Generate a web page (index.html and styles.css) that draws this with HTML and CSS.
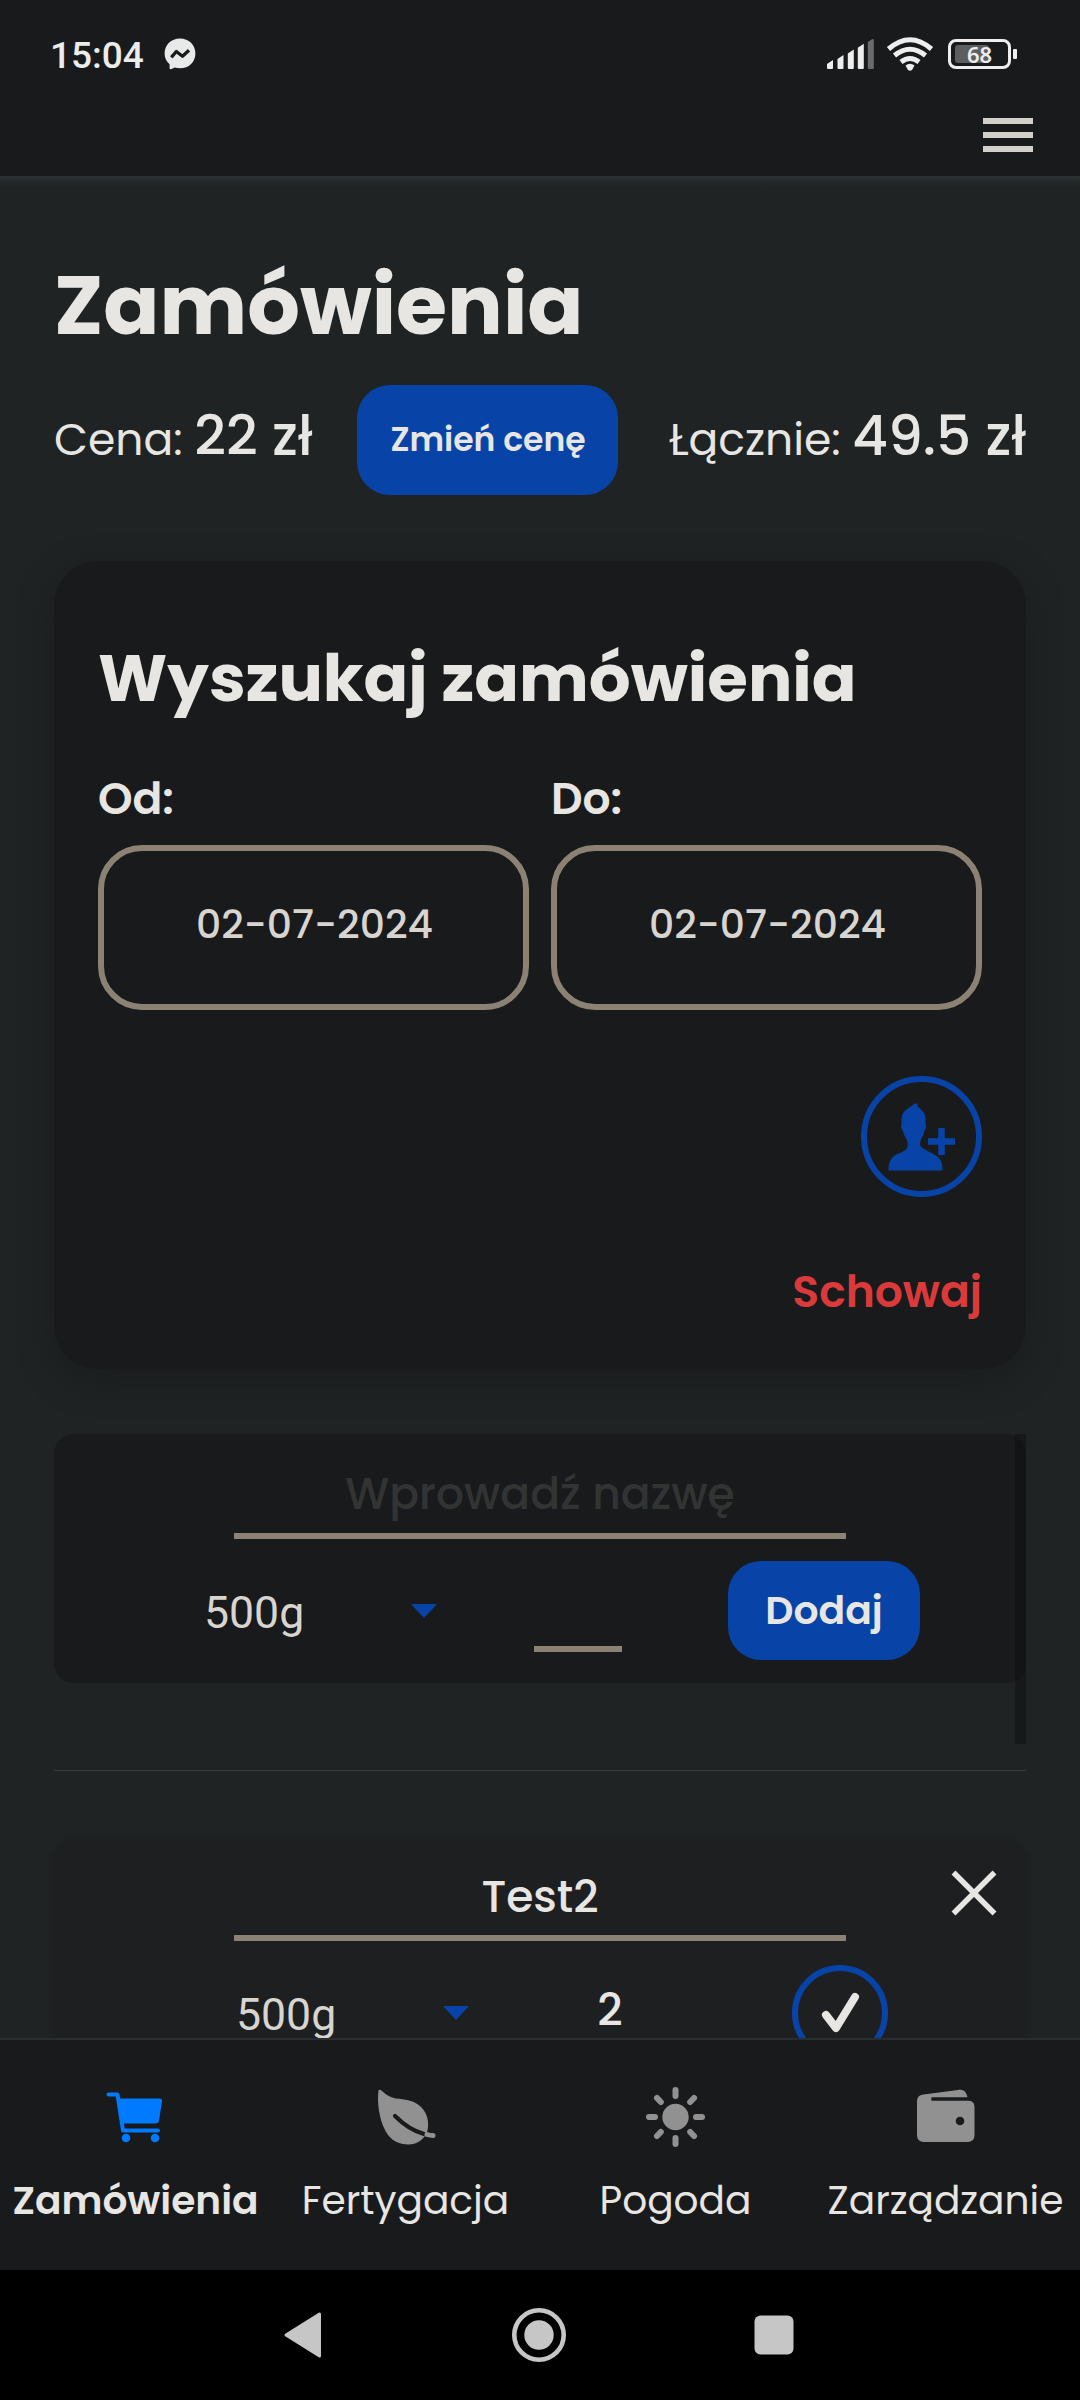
FILE: index.html
```html
<!DOCTYPE html>
<html lang="pl">
<head>
<meta charset="utf-8">
<title>Zamówienia</title>
<link rel="stylesheet" href="styles.css">
</head>
<body>
<div class="screen">
  <header class="header">
    <div class="status">
      <span class="clock">15:04</span>
      <svg class="messenger" width="32" height="32" viewBox="0 0 32 32"><path fill="#e8eae9" d="M16 .5C7 .5.6 7 .6 15.400c0 4.600 1.800 8 5 10.800V30c0 1.200.8 1.600 1.800 1.100l3.500-1.600c1.600.5 3.300.8 5.100.8 9 0 15.400-6.500 15.400-14.900S25 .5 16 .5z"/><path fill="none" stroke="#191a1c" stroke-width="3.300" stroke-linejoin="round" d="M7.300 19.300l5-5.800 6.200 4.800 6.500-6"/></svg>
      <svg class="signal" width="50" height="32" viewBox="0 0 50 32"><g fill="#eee"><path d="M1 26l6-4v8q0 1-1 1H2q-1 0-1-1zM11.500 21l6-4v13q0 1-1 1h-4q-1 0-1-1zM21.800 15.500l6-4V30q0 1-1 1h-4q-1 0-1-1zM31.800 9.800l6-4V30q0 1-1 1h-4q-1 0-1-1z"/><path fill="#6a6b6c" d="M41.800 4l4.500-3q1.500 0 1.500 1v28q0 1-1 1h-4q-1 0-1-1z"/></g></svg>
      <svg class="wifi" width="48" height="36" viewBox="0 0 48 36"><g fill="none" stroke="#eee" stroke-width="5"><path d="M2.500 13Q24-5.500 45.500 13M8.500 19.500q15.500-12.500 31 0M15 26q9-7 18 0"/></g><path fill="#eee" d="M19.500 29.500q4.500-3.500 9 0L26 34q-2 1.500-4 0z"/></svg>
      <span class="battery"><span class="battery-body"><span class="battery-level"></span><b>68</b></span><span class="battery-tip"></span></span>
    </div>
    <div class="menu"><i></i><i></i><i></i></div>
  </header>

  <main class="main">
    <h1>Zamówienia</h1>
    <div class="summary">
      <p>Cena: <strong>22 zł</strong></p>
      <button class="btn btn-price">Zmień cenę</button>
      <p class="total">Łącznie: <strong>49.5 zł</strong></p>
    </div>

    <section class="search">
      <h2>Wyszukaj zamówienia</h2>
      <div class="dates">
        <div class="field"><label>Od:</label><div class="date">02-07-2024</div></div>
        <div class="field"><label>Do:</label><div class="date">02-07-2024</div></div>
      </div>
      <div class="add-user">
        <svg width="110" height="110" viewBox="1 1 110 110"><path fill="#0844a8" d="M49 22.500c-3 2.500-10 5.500-12.500 11-1.200 3.500-1.200 7-.8 10.500-1 .5-.6 4 .8 5.500 1 1 .9 2.500 1.500 4 .8 2.500 3 4.500 3.500 7 .5 4 .5 6.500-2 8.500-4.500 3-9.500 3.500-13 7.500-3.500 3.800-4 8.500-4 13h54c0-4.500-.5-9.200-4-13-4-4-9.500-5-14-8.500-4.500-2-5-4.500-4-8 .5-3 2.500-4.500 3-7 .5-1.200.3-2.500 1.200-3.500 1.400-1.500 1.800-5 .8-5.500.3-3.500.3-7-.8-10.500-1-3-3.500-5-6-7-1.500-1-1.800-2.500-.5-4-1.200-.1-2.300-.1-3.200 0z"/><path stroke="#0844a8" stroke-width="6.500" d="M62 60.500h27M75.500 47v27"/></svg>
      </div>
      <a class="hide">Schowaj</a>
    </section>

    <div class="scroll">
      <div class="order order-new">
        <div class="name placeholder">Wprowadź nazwę</div>
        <div class="row">
          <div class="select">500g<i class="caret"></i></div>
          <div class="qty"></div>
          <button class="btn btn-add">Dodaj</button>
        </div>
      </div>
      <span class="scrollbar"></span>
    </div>

    <hr>

    <div class="order order-item">
      <div class="name">Test2</div>
      <svg class="close" width="46" height="46" viewBox="0 0 46 46"><path stroke="#e8e6e3" stroke-width="5.500" d="M2.500 2.500l41 41M43.500 2.500l-41 41"/></svg>
      <div class="row">
        <div class="select">500g<i class="caret"></i></div>
        <div class="qty">2</div>
        <div class="done"><svg width="84" height="84" viewBox="0 0 84 84"><path fill="none" stroke="#e8e6e3" stroke-width="8" stroke-linecap="round" stroke-linejoin="round" d="M28 44l10 13 19-31"/></svg></div>
      </div>
    </div>
  </main>

  <nav class="tabs">
    <a class="tab active">
      <svg width="66" height="66" viewBox="0 0 66 66"><path fill="none" stroke="#007bff" stroke-width="4" stroke-linecap="round" stroke-linejoin="round" d="M7.500 9.500h9l5.500 36h35"/><path fill="#007bff" d="M18 13.500h40.500q3 0 2.500 3L58 35.500q-.5 3-3.500 3H20.500z"/><circle cx="25" cy="53" r="4.300" fill="#007bff"/><circle cx="54" cy="53" r="4.300" fill="#007bff"/></svg>
      <span>Zamówienia</span>
    </a>
    <a class="tab">
      <svg width="66" height="66" viewBox="0 0 66 66"><path fill="#919191" d="M6.500 5.500Q8 4 10 6c5 4.500 8.500 6.500 14 7.500 9 1 16 1.500 22 6 9 6.500 12 17 9 28-4 8-10.500 12-18.500 12C27 59.500 19 56 13.500 46 7 34 5 17 6.500 5.500z"/><path fill="none" stroke="#191a1c" stroke-width="4.200" stroke-linecap="round" d="M23 31c8 8 18 15 29 18"/><path fill="none" stroke="#919191" stroke-width="5" stroke-linecap="round" d="M55 49.500q3 1 6 1"/></svg>
      <span>Fertygacja</span>
    </a>
    <a class="tab">
      <svg width="66" height="66" viewBox="0 0 66 66"><circle cx="33.500" cy="32" r="13.200" fill="#919191"/><g stroke="#919191" stroke-width="6" stroke-linecap="round"><path d="M33.500 5v6M33.500 53v6M7 32h6M54 32h6M15 13l3.800 4M52 13l-3.800 4M15 51l3.800-4M52 51l-3.800-4"/></g></svg>
      <span>Pogoda</span>
    </a>
    <a class="tab">
      <svg width="66" height="66" viewBox="0 0 66 66"><path fill="#919191" d="M5 17c0-5 2.500-7 6.500-7.500L46 5c5-.8 8.500 1.500 9.500 7.500H19.500v3H56q6.500 0 6.500 6.500v28q0 7-7 7H12q-7 0-7-7z"/><path stroke="#191a1c" stroke-width="3" d="M19.500 14H58"/><circle cx="48" cy="36" r="4.300" fill="#191a1c"/></svg>
      <span>Zarządzanie</span>
    </a>
  </nav>

  <footer class="sysnav">
    <svg width="38" height="48" viewBox="0 0 38 48"><path fill="#c6c6c6" stroke="#c6c6c6" stroke-width="3" stroke-linejoin="round" d="M35.500 3v42L2 24z"/></svg>
    <svg class="home" width="56" height="56" viewBox="0 0 56 56"><circle cx="28" cy="28" r="24.700" fill="none" stroke="#c6c6c6" stroke-width="4.600"/><circle cx="28" cy="28" r="14.700" fill="#c6c6c6"/></svg>
    <svg width="40" height="40" viewBox="0 0 40 40"><rect x=".5" y=".5" width="39" height="39" rx="6" fill="#c6c6c6"/></svg>
  </footer>
</div>
</body>
</html>
```
FILE: styles.css
```css
* { box-sizing: border-box; margin: 0; padding: 0; }

body {
  background: #1f2324;
  color: #e8e6e3;
  font: 400 44px/66px "Poppins", Inter, sans-serif;
}

svg { display: block; flex: none; }

.screen {
  width: 1080px;
  height: 2400px;
  display: flex;
  flex-direction: column;
  overflow: hidden;
}

/* Status bar and menu */
.header {
  flex: none;
  height: 176px;
  background: #191a1c;
}

.status {
  display: flex;
  align-items: center;
  height: 108px;
  padding: 0 63px 0 50px;
}

.clock {
  width: 114px;
  padding-top: 3px;
  font: 500 37px/40px Roboto, sans-serif;
  color: #ebedec;
}

.signal { margin-left: auto; }
.wifi { margin-left: 10px; }

.battery {
  display: flex;
  align-items: center;
  margin-left: 14px;
}

.battery-body {
  display: flex;
  align-items: center;
  justify-content: center;
  position: relative;
  width: 63px;
  height: 30px;
  border: 3px solid #eee;
  border-radius: 8px;
  font: 700 22px/24px "Noto Sans", sans-serif;
  color: #eee;
}

.battery-body b { position: relative; font-weight: 600; }

.battery-level {
  position: absolute;
  left: 4px;
  top: 3px;
  width: 34px;
  height: 18px;
  border-radius: 3px;
  background: #5d5e5f;
}

.battery-tip {
  width: 4px;
  height: 10px;
  margin-left: 2px;
  border-radius: 1px;
  background: #eee;
}

.menu {
  display: flex;
  flex-direction: column;
  gap: 8px;
  width: 50px;
  margin: 10px 47px 0 auto;
}

.menu i { height: 6px; background: #d3cfcb; }

/* Content */
.main {
  flex: 1;
  min-height: 0;
  overflow: hidden;
  padding: 69px 54px 0;
  background: linear-gradient(#2d3334, #222728 6px, #1f2324 12px);
}

h1 {
  height: 120px;
  font-size: 82.8px;
  font-weight: 700;
  line-height: 120px;
}

.summary {
  display: flex;
  align-items: center;
  height: 110px;
  margin-top: 20px;
  white-space: nowrap;
}

.summary strong { font-size: 55px; font-weight: 500; line-height: 0; }
.summary .total { margin-left: auto; }

.btn {
  border: 0;
  border-radius: 33px;
  background: #0844a8;
  color: #e8e6e3;
  font-family: inherit;
  font-weight: 600;
}

.btn-price {
  width: 261px;
  height: 110px;
  margin-left: 45px;
  font-size: 33px;
}

.search {
  height: 808px;
  margin-top: 66px;
  padding: 68px 44px 0;
  border-radius: 44px;
  background: #191a1c;
  box-shadow: 0 11px 33px #1b1d1f;
}

h2 {
  font-size: 65.900px;
  font-weight: 700;
  line-height: 99px;
}

.dates {
  display: flex;
  gap: 22px;
  margin-top: 41px;
}

.field { flex: 1; }

.field label {
  display: block;
  font-weight: 600;
  line-height: 60px;
}

.date {
  height: 165px;
  margin-top: 16px;
  padding-left: 2px;
  border: 6px solid #8c8273;
  border-radius: 44px;
  color: #d8d5d0;
  font-size: 39.3px;
  font-weight: 500;
  line-height: 147px;
  text-align: center;
}

.add-user {
  width: 121px;
  height: 121px;
  margin: 66px 0 0 auto;
  border: 6px solid #0844a8;
  border-radius: 50%;
}

.hide {
  display: block;
  margin-top: 62px;
  color: #dc3a3a;
  font-weight: 600;
  text-align: right;
}

/* Orders */
.scroll {
  position: relative;
  height: 310px;
  margin-top: 65px;
}

.scrollbar {
  position: absolute;
  top: 0;
  right: 0;
  width: 11px;
  height: 100%;
  background: rgba(16, 17, 18, .6);
}

.order {
  height: 249px;
  padding-top: 22px;
  border-radius: 20px;
  background: #191a1c;
}

.name {
  width: 612px;
  height: 83px;
  margin: 0 auto;
  border-bottom: 6px solid #8c8273;
  font-weight: 500;
  line-height: 77px;
  text-align: center;
}

.placeholder { color: #323433; line-height: 75px; }

.row {
  display: flex;
  align-items: center;
  height: 99px;
  margin-top: 22px;
  padding-left: 150px;
}

.select {
  display: flex;
  align-items: center;
  justify-content: space-between;
  width: 233px;
  margin-right: 1px;
  color: #d8d5d0;
  font: 400 44.6px/54px Roboto, sans-serif;
  padding-top: 4px;
}

.caret {
  margin-top: -4px;
  border: solid transparent;
  border-width: 14px 13.500px 0;
  border-top-color: #0844a8;
}

.qty {
  width: 88px;
  height: 83px;
  margin-left: 96px;
  border-bottom: 6px solid #8c8273;
  font-weight: 500;
  line-height: 77px;
  text-align: center;
}

.btn-add {
  width: 192px;
  height: 99px;
  margin-left: 106px;
  font-size: 39.3px;
}

hr {
  height: 1px;
  margin: 26px 0 70px;
  border: 0;
  background: #383c3e;
}

.order-item {
  position: relative;
  padding-top: 17px;
  background: #1d1f20;
  box-shadow: 0 0 5px #1d1f20;
}

.order-item .row { padding-left: 182px; }

.close {
  position: absolute;
  top: 29px;
  right: 29px;
}

.done {
  width: 96px;
  height: 96px;
  margin-left: 138px;
  border: 6px solid #0844a8;
  border-radius: 50%;
}

/* Bottom navigation */
.tabs {
  flex: none;
  display: grid;
  grid-template-columns: repeat(4, 1fr);
  height: 232px;
  border-top: 2px solid #2b2e30;
  background: #191a1c;
}

.tab {
  display: flex;
  flex-direction: column;
  align-items: center;
  padding-top: 45px;
  font-size: 39.1px;
  line-height: 60px;
  white-space: nowrap;
}

.tab span { margin: 20px 0 0 1px; }
.active { font-weight: 600; }

.active svg { margin-left: -2px; }

.sysnav {
  flex: none;
  display: flex;
  align-items: center;
  justify-content: space-between;
  height: 130px;
  padding: 0 286px 0 284px;
  background: #000;
}

.home { margin-left: 2px; }
```
